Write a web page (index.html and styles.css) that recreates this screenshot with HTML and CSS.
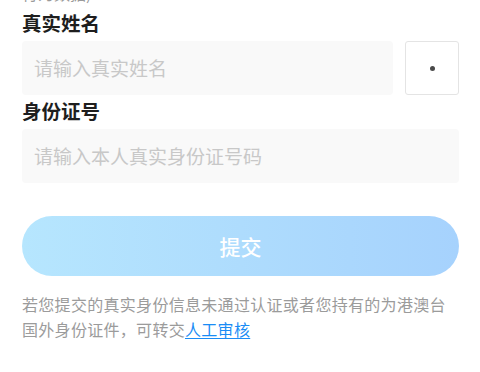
FILE: index.html
```html
<!DOCTYPE html>
<html lang="zh-CN">
<head>
<meta charset="utf-8">
<link rel="stylesheet" href="styles.css">
</head>
<body>
<div class="page">
  <div class="hint">行为数据)</div>
  <div class="label first">真实姓名</div>
  <div class="row">
    <div class="field name"><span class="ph">请输入真实姓名</span></div>
    <div class="pick"><span class="dot"></span></div>
  </div>
  <div class="label">身份证号</div>
  <div class="field"><span class="ph">请输入本人真实身份证号码</span></div>
  <button class="submit">提交</button>
  <p class="note">若您提交的真实身份信息未通过认证或者您持有的为港澳台国外身份证件，可转交<a class="link">人工审核</a></p>
</div>
</body>
</html>
```
FILE: styles.css
```css
html, body {
  margin: 0;
  padding: 0;
  background: #ffffff;
  overflow: hidden;
}
body {
  font-family: "Noto Sans CJK SC", "Noto Sans", sans-serif;
  width: 480px;
  height: 372px;
}
.page {
  padding: 0 21px 0 22px;
  display: flex;
  flex-direction: column;
}
.hint {
  margin-top: -17px;
  font-size: 16px;
  line-height: 20px;
  height: 20px;
  color: #9a9a9a;
}
.label {
  font-size: 19.5px;
  font-weight: 700;
  color: #1e1e1e;
  line-height: 28px;
  margin-top: 2px;
  margin-bottom: 4px;
}
.label.first {
  margin-top: 6px;
}
.row {
  display: flex;
  gap: 12px;
}
.field {
  height: 54px;
  background: #f9f9f9;
  border-radius: 4px;
  display: flex;
  align-items: center;
  padding-left: 12px;
  box-sizing: border-box;
}
.field.name {
  flex: 1;
}
.ph {
  font-size: 19px;
  color: #c8c8c8;
  line-height: 26px;
}
.pick {
  width: 54px;
  height: 54px;
  box-sizing: border-box;
  border: 1px solid #e4e4e4;
  border-radius: 3px;
  display: flex;
  align-items: center;
  justify-content: center;
}
.dot {
  width: 5px;
  height: 5px;
  border-radius: 50%;
  background: #4a4a4a;
}
.submit {
  margin-top: 33px;
  height: 60px;
  border: none;
  border-radius: 30px;
  background: linear-gradient(90deg, #b6e6fe 0%, #aedcfd 50%, #a6d2fd 100%);
  color: #ffffff;
  font-family: "Noto Sans CJK SC", sans-serif;
  font-size: 21px;
  font-weight: 500;
  padding: 0;
}
.note {
  margin: 16px 0 0;
  font-size: 16px;
  letter-spacing: 0.3px;
  line-height: 25px;
  color: #9b9b9b;
}
.link {
  color: #1a8cf5;
  text-decoration: underline;
  text-underline-offset: 2px;
}
```
